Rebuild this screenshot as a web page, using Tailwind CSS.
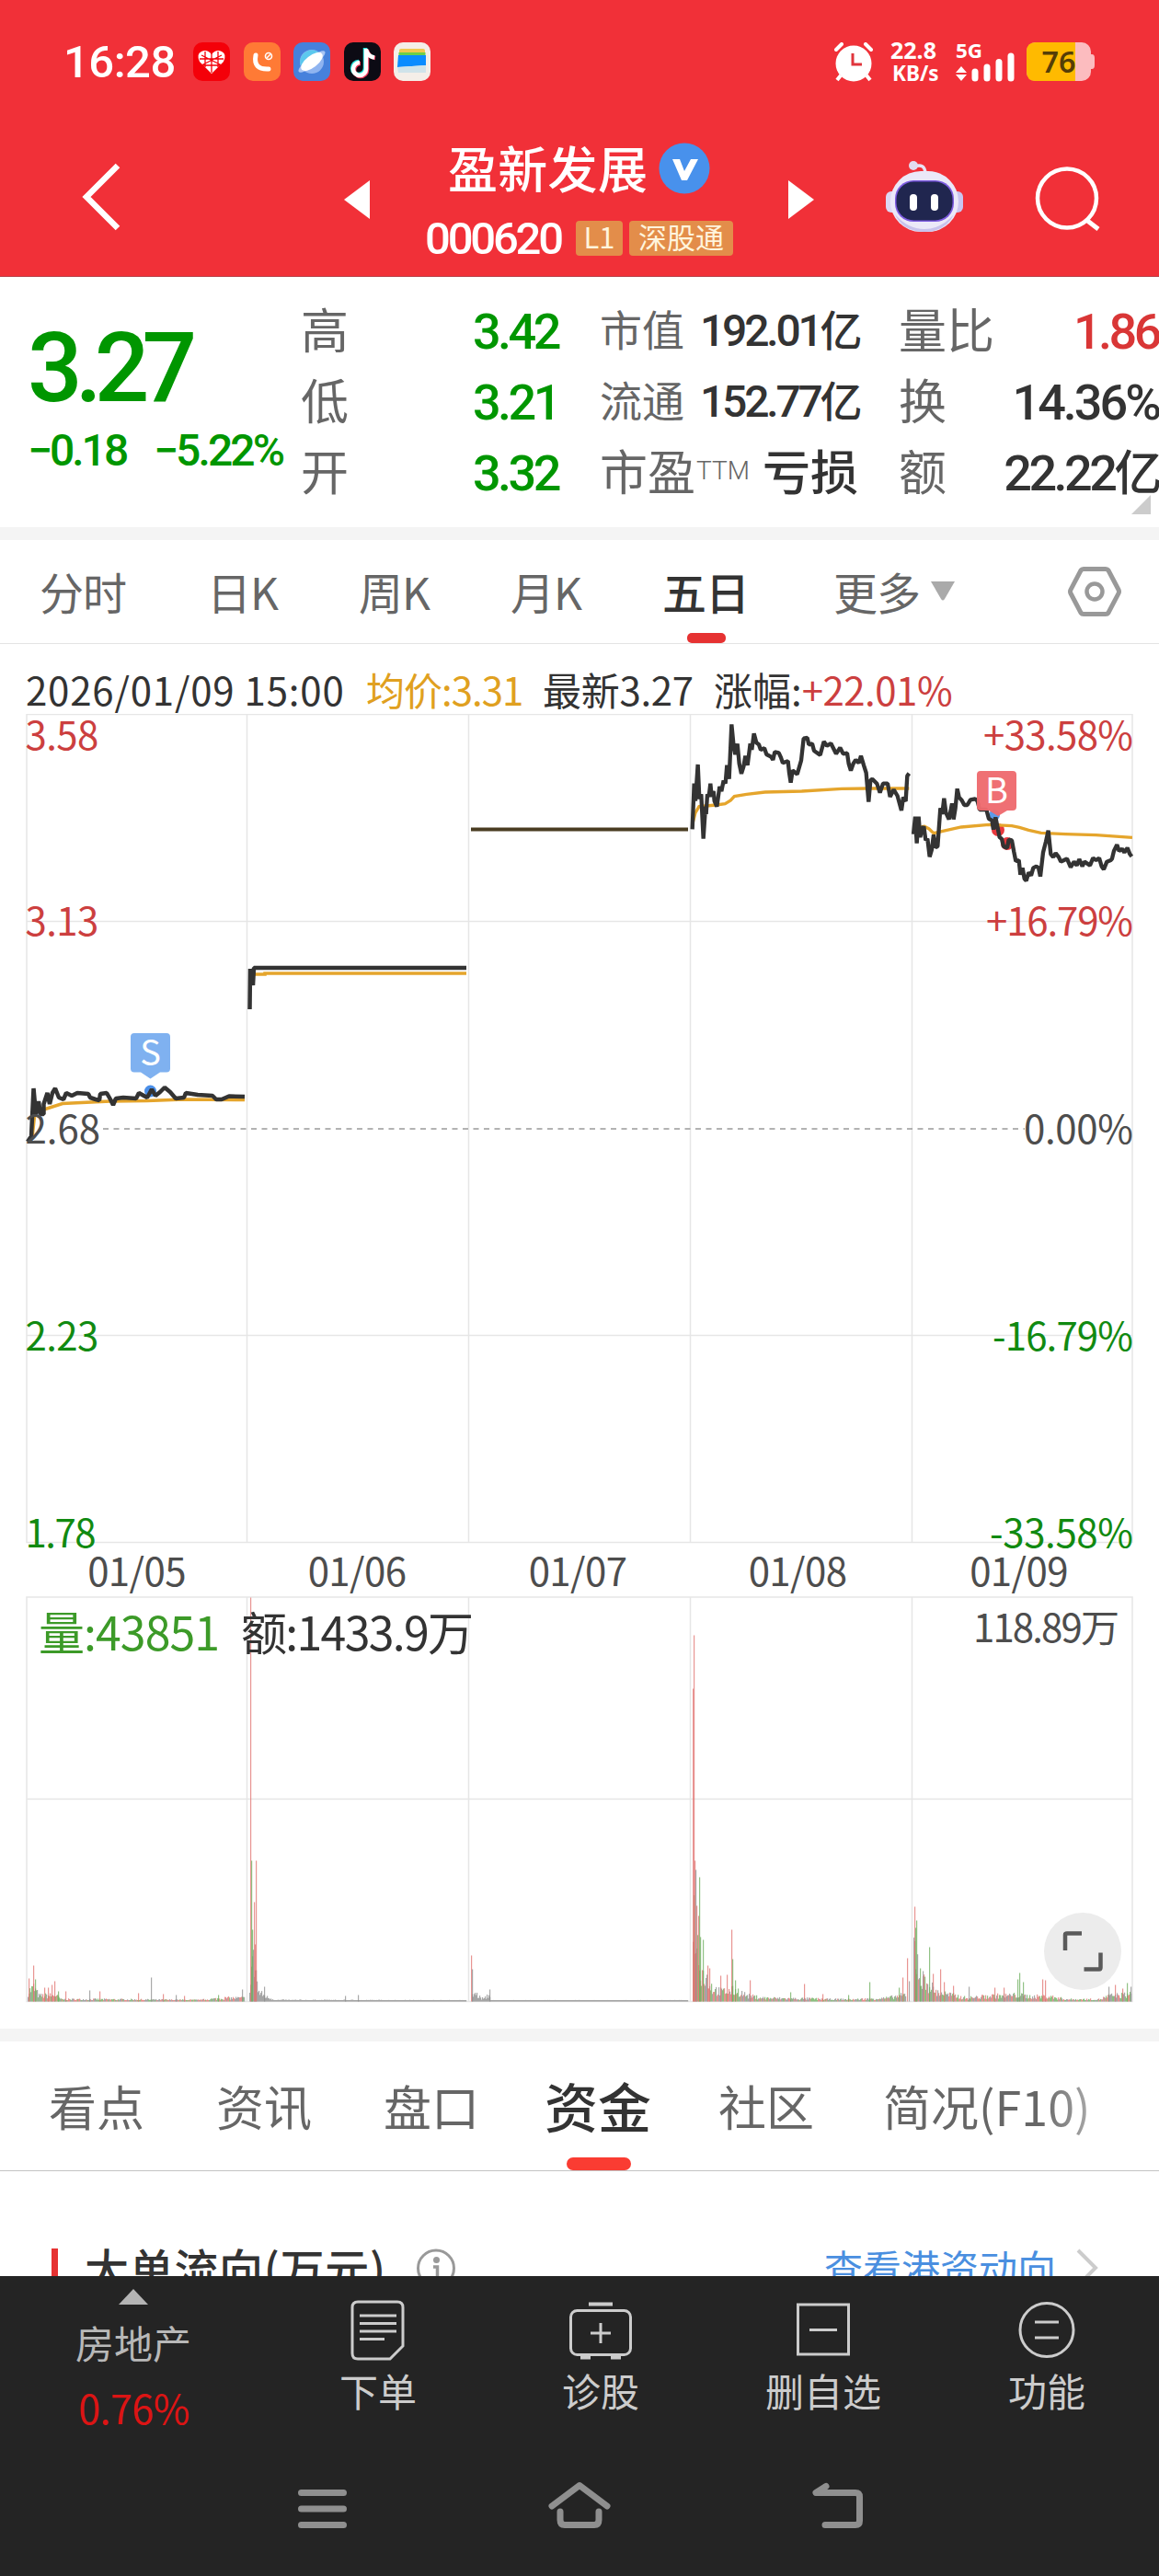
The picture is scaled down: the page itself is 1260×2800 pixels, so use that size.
<!DOCTYPE html>
<html lang="zh-CN">
<head>
  <meta charset="UTF-8">
  <meta name="viewport" content="width=device-width, initial-scale=1">
  <title>盈新发展 000620</title>
  <script src="https://cdn.jsdelivr.net/npm/@tailwindcss/browser@4"></script>
</head>

<body class="w-[1260px] h-[2800px] overflow-hidden bg-white text-[#333] font-['Noto_Sans_CJK_SC',sans-serif] leading-none whitespace-nowrap flex flex-col">

<!-- Header -->
<header class="h-[301px] shrink-0 bg-[#f13038] text-white border-b border-[#b84048]">
  <!-- Status bar -->
  <div class="flex items-center h-[134px] pl-[69px]">
    <div class="w-[141px] font-[Roboto] font-medium text-[49px] tracking-[-0.5px]">16:28</div>
    <div class="flex gap-[14.5px] w-[696px]">
      <svg class="w-10 h-[42px]" viewBox="0 0 40 42">
        <rect width="40" height="42" rx="10" fill="#f40009"/>
        <path d="M20 34L7 21Q3 13 9 10Q15 7 20 13Q25 7 31 10Q37 13 33 21Z" fill="#fff"/>
        <path d="M9 14L31 25M31 14L9 25M20 12V33M13 10V27M27 10V27M7 18H33M11 25H29" stroke="#f40009" stroke-width="1.3"/>
      </svg>
      <svg class="w-10 h-[42px]" viewBox="0 0 40 42">
        <rect width="40" height="42" rx="10" fill="#ff7a35"/>
        <path d="M13 14Q10 30 27 29" fill="none" stroke="#fff" stroke-width="5" stroke-linecap="round"/>
        <circle cx="27" cy="15" r="3.5" fill="none" stroke="#fff" stroke-width="1.6"/>
        <path d="M25 17L29 13" stroke="#fff" stroke-width="1.4"/>
      </svg>
      <svg class="w-10 h-[42px]" viewBox="0 0 40 42">
        <rect width="40" height="42" rx="10" fill="#4681dc"/>
        <circle cx="20" cy="21" r="13" fill="#8fb4f0"/>
        <path d="M8 26A13 13 0 0 1 28 11Z" fill="#5cc8ee"/>
        <ellipse cx="20" cy="21" rx="18" ry="5" transform="rotate(-38 20 21)" fill="#a9c5f3"/>
        <ellipse cx="20" cy="21" rx="14" ry="6.5" transform="rotate(-38 20 21)" fill="#fff"/>
      </svg>
      <svg class="w-10 h-[42px]" viewBox="0 0 40 42">
        <rect width="40" height="42" rx="10" fill="#0c0b14"/>
        <g fill="none" stroke-width="4.5">
          <path d="M23 6V28A7 7 0 1 1 16 21M23 8Q25 15 32 16" stroke="#25e4dc"/>
          <path d="M25 8V30A7 7 0 1 1 18 23M25 9Q27 16 34 17" stroke="#f33a5c"/>
          <path d="M24 7V29A7 7 0 1 1 17 22M24 8Q26 15.500 33 16.500" stroke="#fff"/>
        </g>
      </svg>
      <svg class="w-10 h-[42px]" viewBox="0 0 40 42">
        <rect width="40" height="42" rx="10" fill="#f4eee8"/>
        <rect x="6" y="7" width="28" height="8" rx="2" fill="#f0c850"/>
        <rect x="5.500" y="11" width="29" height="6" fill="#6cd048"/>
        <path d="M5 14H35V25L4 27Z" fill="#0a8cff"/>
        <path d="M4 27L35 25V33H5Z" fill="#cfe3ea"/>
      </svg>
    </div>
    <!-- Alarm -->
    <svg class="w-[44px] h-[43px] mr-[18px]" viewBox="0 0 44 43">
      <path d="M3 8L9 2M41 8L35 2" stroke="#fff" stroke-width="4" stroke-linecap="round"/>
      <path d="M8 36L4 41M36 36L40 41" stroke="#fff" stroke-width="4"/>
      <circle cx="22" cy="23" r="19.500" fill="#fff"/>
      <path d="M21 12V24H31" fill="none" stroke="#e0353c" stroke-width="3"/>
    </svg>
    <div class="w-[71px] font-['Noto_Sans'] font-bold text-[25px] leading-[25px]">
      <div>22.8</div>
      <div class="text-[22.5px] pl-0.5">KB/s</div>
    </div>
    <svg class="w-[66px] h-[44px] mr-[11px]" viewBox="0 0 66 44">
      <text x="0" y="18" fill="#fff" font-family="Noto Sans" font-weight="700" font-size="21" textLength="29" lengthAdjust="spacingAndGlyphs">5G</text>
      <path d="M0 34L6 27L12 34ZM0 36L6 43L12 36Z" fill="#fff"/>
      <path d="M21 34V41M34 29V41M47 23.500V41M60 17V41" stroke="#fff" stroke-width="7" stroke-linecap="round" transform="translate(0 -1)"/>
    </svg>
    <svg class="w-[74px] h-[42px]" viewBox="0 0 74 42">
      <path d="M69 13H71Q74 13 74 17V25Q74 29 71 29H69Z" fill="#fcbcbf"/>
      <rect width="70" height="42" rx="10" fill="#fcbcbf"/>
      <path d="M10 0H53V42H10Q0 42 0 32V10Q0 0 10 0Z" fill="#ffba00"/>
      <text x="35" y="33" text-anchor="middle" fill="#553e07" font-family="Noto Sans" font-weight="600" font-size="33" textLength="37" lengthAdjust="spacingAndGlyphs">76</text>
    </svg>
  </div>

  <!-- Title bar -->
  <div class="flex h-[166px]">
    <svg class="w-[50px] h-[84px] ml-[87px] mt-[38px]" viewBox="0 0 50 84"><path d="M41 8L7 42L41 76" fill="none" stroke="#fff" stroke-width="6.500"/></svg>
    <svg class="w-7 h-[42px] ml-[237px] mt-[62px]" viewBox="0 0 28 42"><path d="M0 21L28 0V42Z" fill="#fff"/></svg>
    <div class="w-[455px] pl-[58px]">
      <div class="flex pl-[27px] pt-[21px] h-[101px]">
        <h1 class="text-[54px] font-medium w-[229px] tracking-[0.300px]">盈新发展</h1>
        <svg class="w-14 h-14" viewBox="0 0 56 56"><circle cx="28" cy="28" r="27.500" fill="#4891ec"/><path d="M15 18H23L28 31L35 18H43L31 41H25Z" fill="#fff"/></svg>
      </div>
      <div class="flex items-center h-[50px] -mt-px">
        <div class="w-[166px] pl-0.5 font-[Roboto] font-medium text-[49px] tracking-[-3.200px]">000620</div>
        <div class="w-[51px] h-[38px] mr-[7px] bg-[#e38d4a] text-[#fff4dc] rounded-[4px] text-[31px] text-center leading-[34px]">L1</div>
        <div class="w-[113px] h-[38px] bg-[#e38d4a] text-[#fff4dc] rounded-[4px] text-[31px] text-center leading-[34px]">深股通</div>
      </div>
    </div>
    <svg class="w-7 h-[42px] mt-[62px]" viewBox="0 0 28 42"><path d="M28 21L0 0V42Z" fill="#fff"/></svg>
    <!-- Robot assistant -->
    <svg class="w-[86px] h-[80px] ml-[77px] mt-[39px]" viewBox="0 0 86 80">
      <path d="M32 8Q43 4 44 15" fill="none" stroke="#e9e2f4" stroke-width="3.500"/>
      <circle cx="31" cy="7" r="5" fill="#e2dcf0"/>
      <rect x="1" y="35" width="14" height="23" rx="6" fill="#dcd8f4"/>
      <rect x="71" y="35" width="14" height="23" rx="6" fill="#c9c5f0"/>
      <rect x="6" y="13" width="74" height="66" rx="33" fill="#ebe8f8"/>
      <path d="M11 60Q25 76 43 76T75 60Q66 79 43 79T11 60Z" fill="#c8c2ec"/>
      <rect x="11" y="23" width="64" height="45" rx="20" fill="#7d5be0"/>
      <rect x="12.500" y="24.500" width="61" height="42" rx="19" fill="#20264f"/>
      <rect x="27" y="38" width="8" height="18" rx="4" fill="#fff"/>
      <rect x="50" y="38" width="8" height="18" rx="4" fill="#fff"/>
    </svg>
    <svg class="w-[76px] h-[76px] ml-[76px] mt-[44px]" viewBox="0 0 76 76"><circle cx="36" cy="37.500" r="32" fill="none" stroke="#fff" stroke-width="4.500"/><path d="M57 61L70 71" stroke="#fff" stroke-width="5"/></svg>
  </div>
</header>

<!-- Quote summary -->
<section class="h-[272px] shrink-0 flex font-[Roboto,'Noto_Sans_CJK_SC',sans-serif]">
  <div class="w-[327px] pl-[30px] pt-[47px] text-[#009600] font-medium">
    <div class="text-[105px] tracking-[-8px]">3.27</div>
    <div class="flex mt-[13px] text-[48px] tracking-[-3px]">
      <span class="w-[137px]">−0.18</span>
      <span class="tracking-[-2.900px]">−5.22%</span>
    </div>
  </div>
  <div class="w-[280px] pt-[33px] text-[#666] text-[52px]">
    <div class="flex justify-between items-baseline h-[77px]"><span>高</span><b class="font-medium text-[#009600] text-[54px] tracking-[-3.500px]">3.42</b></div>
    <div class="flex justify-between items-baseline h-[77px]"><span>低</span><b class="font-medium text-[#009600] text-[54px] tracking-[-3.500px]">3.21</b></div>
    <div class="flex justify-between items-baseline h-[77px]"><span>开</span><b class="font-medium text-[#009600] text-[54px] tracking-[-3.500px]">3.32</b></div>
  </div>
  <div class="w-[285px] ml-[45px] pt-[35px] text-[#666] text-[46px]">
    <div class="flex items-baseline h-[77px]"><span class="w-[109px]">市值</span><b class="font-medium text-[#333] text-[48px] tracking-[-3.200px]">192.01<span class="text-[46px]">亿</span></b></div>
    <div class="flex items-baseline h-[77px]"><span class="w-[109px]">流通</span><b class="font-medium text-[#333] text-[48px] tracking-[-3.200px]">152.77<span class="text-[46px]">亿</span></b></div>
    <div class="flex items-start h-[77px] text-[52px]"><span class="w-[105px]">市盈</span><span class="w-[72px] text-[28px] font-light mt-2">TTM</span><b class="font-medium text-[#333]">亏损</b></div>
  </div>
  <div class="w-[283px] ml-[40px] pt-[33px] text-[#666] text-[52px]">
    <div class="flex justify-between items-baseline h-[77px]"><span>量比</span><b class="font-medium text-[#d93636] text-[54px] tracking-[-3.500px]">1.86</b></div>
    <div class="flex justify-between items-baseline h-[77px]"><span>换</span><b class="font-medium text-[#333] text-[54px] tracking-[-3px]">14.36%</b></div>
    <div class="flex justify-between items-baseline h-[50px]"><span>额</span><b class="font-medium text-[#333] text-[54px] tracking-[-3.500px]">22.22<span class="text-[52px]">亿</span></b></div>
    <svg class="w-[21px] h-[21px] ml-[253px]" viewBox="0 0 21 21"><path d="M21 0V21H0Z" fill="#ccc"/></svg>
  </div>
</section>

<div class="h-[14px] shrink-0 bg-[#f4f4f4]"></div>

<!-- Period tabs -->
<nav class="h-[113px] shrink-0 flex pt-[31px] pl-[43px] text-[48px] tracking-[-1px] text-[#666] border-b border-[#e4e4e4]">
  <div class="w-[182px]">分时</div>
  <div class="w-[165px]">日K</div>
  <div class="w-[165px]">周K</div>
  <div class="w-[165px]">月K</div>
  <div class="w-[186px] text-[#333] font-medium">
    五日
    <div class="w-[42px] h-[11px] ml-[27px] mt-[22px] rounded-[5px] bg-[#e63232]"></div>
  </div>
  <div class="w-[106px]">更多</div>
  <svg class="w-[26px] h-[21px] mt-[14px]" viewBox="0 0 26 21"><path d="M0 0H26L15 19Q13 22 11 19Z" fill="#aaa"/></svg>
  <svg class="w-[58px] h-[56px] ml-[123px] -mt-[3px]" viewBox="0 0 58 56"><path d="M17 3.500H41Q43 3.500 44 5L55 26Q56 28 55 30L44 51Q43 52.500 41 52.500H17Q15 52.500 14 51L3 30Q2 28 3 26L14 5Q15 3.500 17 3.500Z" fill="none" stroke="#999" stroke-width="5"/><circle cx="29" cy="28" r="8.500" fill="none" stroke="#999" stroke-width="4.500"/></svg>
</nav>

<!-- Legend -->
<div class="h-[76px] shrink-0 flex pt-[28px] pl-[28px] text-[42px]">
  <span class="w-[370px] tracking-[0.800px]">2026/01/09 15:00</span>
  <span class="w-[192px] text-[#e0a020] tracking-[-1px]">均价:3.31</span>
  <span class="w-[186px] tracking-[-0.300px]">最新3.27</span>
  <span>涨幅:<span class="text-[#cc3f3f] tracking-[-0.500px]">+22.01%</span></span>
</div>

<!-- Price and volume chart -->
<svg class="w-[1260px] h-[1429px] shrink-0" viewBox="0 776 1260 1429" font-size="42">
  <g fill="none" stroke="#e6e6e6" stroke-width="1.500">
    <rect x="29" y="776.500" width="1202" height="900"/>
    <rect x="29" y="1736" width="1202" height="439.500"/>
    <path d="M268.500 777V1676M509.500 777V1676M750.500 777V1676M991.500 777V1676M29 1001.500H1231M29 1451.500H1231"/>
    <path d="M268.500 1736V2175M509.500 1736V2175M750.500 1736V2175M991.500 1736V2175M29 1955.500H1231"/>
    <path d="M112 1227H1114" stroke="#999" stroke-dasharray="6 5.500"/>
  </g>
  <g id="volume"></g>

  <!-- Trade points -->
  <circle cx="163.500" cy="1186" r="6.500" fill="#4a8ee8"/>
  <circle cx="1081" cy="886" r="6" fill="#5b9be8"/>
  <circle cx="1085" cy="902" r="7" fill="#e8383d"/>
  <circle cx="1095" cy="917" r="7" fill="#e8383d"/>

  <!-- Average price -->
  <g fill="none" stroke="#e5a52c" stroke-width="3.500">
    <path d="M35 1236L38 1209L54 1204L68 1199.500L120 1197L160 1196.500L200 1195L266 1195.500"/>
    <path d="M276 1059H288V1058H507"/>
    <polyline transform="translate(745 780) scale(.3333)" stroke-width="10" points="24,345 33,310 45,290 100,285 130,281 148,270 160,257 200,250 260,243 380,240 510,232 600,231 730,231"/>
    <polyline transform="translate(985 820) scale(.3333)" stroke-width="10" points="24,240 60,235 75,243 90,257 120,250 180,237 270,229 345,233 370,238 400,247 440,256 520,260 620,263 738,271"/>
  </g>

  <!-- Price -->
  <g fill="none" stroke="#333" stroke-width="4.500" stroke-linejoin="bevel">
    <polyline points="30,1241 34,1235 36.500,1183 39,1211 42,1197 44,1211 47.500,1211 47.500,1200 51.500,1188 54,1200 57,1188 60,1183 64,1193 69,1195 72,1188 78,1191 84,1188 96,1189 98,1193 104,1195 108,1196 109,1189 116,1188 120,1195 123,1201 126,1194 134,1193 148,1194 151,1188 160,1193 165,1184 169,1191 174,1187 179,1182 185,1187 191,1194 200,1193 202,1188 215,1190 231,1191 235,1195 241,1195 249,1191.500 266,1192"/>
    <path d="M271.500 1097L272 1053L275 1071L276 1052L507 1052"/>
    <path d="M512 901.500H748" stroke="#4a3d22" stroke-width="4"/>
    <polyline transform="translate(745 780) scale(.3333)" stroke-width="13" points="23,364 29,215 33,272 41,153 46,265 52,250 59,395 66,290 68,315 72,250 77,258 82,215 86,258 92,240 95,272 103,290 112,225 118,240 125,205 131,215 136,155 143,200 151,22 158,95 163,120 170,85 176,150 183,183 190,160 196,125 203,155 212,85 217,105 224,52 232,82 240,88 246,105 258,100 265,120 280,128 286,138 292,112 305,115 312,130 318,148 335,142 339,180 344,212 350,172 365,185 378,140 386,68 398,66 403,88 414,85 420,108 440,122 452,78 462,92 475,84 492,118 505,98 515,118 528,116 533,150 540,173 548,150 556,138 566,148 573,125 582,155 590,180 598,275 604,205 610,200 625,215 635,245 645,215 660,215 668,258 680,235 692,255 705,303 711,260 719,273 724,190 730,182"/>
    <polyline transform="translate(985 820) scale(.3333)" stroke-width="13" points="24,260 30,203 35,290 41,203 46,270 52,245 58,235 64,280 70,275 77,334 84,310 90,262 96,303 103,300 112,175 118,195 124,143 130,190 140,212 150,160 155,212 161,175 167,112 173,140 182,150 190,165 200,165 210,148 225,145 233,152 240,180 262,180 270,210 280,215 285,245 292,205 298,235 305,270 312,275 318,300 330,305 335,278 345,280 352,318 358,348 368,345 373,392 380,370 386,405 392,412 400,385 408,395 415,370 425,365 432,370 438,398 447,320 456,285 464,248 472,325 480,335 488,322 498,335 505,350 515,345 525,340 537,368 548,350 557,362 565,342 575,365 582,350 600,362 610,338 620,345 630,338 638,365 645,375 655,350 668,345 672,340 678,315 688,295 695,315 705,308 712,320 722,305 730,325 736,333"/>
  </g>

  <!-- Buy / sell flags -->
  <g fill="#fff" text-anchor="middle" font-size="38">
    <path d="M146 1123H181Q185 1123 185 1127V1161.500Q185 1165.500 181 1165.500H174L163.500 1172.500L153 1165.500H146Q142 1165.500 142 1161.500V1127Q142 1123 146 1123Z" fill="#7fb1f0"/>
    <text x="163.500" y="1158">S</text>
    <path d="M1067 838H1101Q1105 838 1105 842V877Q1105 881 1101 881H1095L1085 887L1075 881H1066Q1062 881 1062 877V842Q1062 838 1066 838Z" fill="#ee6a6e" fill-opacity=".96"/>
    <text x="1083.500" y="873">B</text>
  </g>

  <!-- Axis labels -->
  <g fill="#cc3f3f">
    <text x="27.500" y="814.500" letter-spacing="-.6">3.58</text>
    <text x="27.500" y="1016.500" letter-spacing="-.6">3.13</text>
    <text x="1232" y="814.500" text-anchor="end" textLength="163">+33.58%</text>
    <text x="1232" y="1016.500" text-anchor="end" textLength="160">+16.79%</text>
  </g>
  <g fill="#4d4d4d">
    <text x="27.500" y="1243">2.68</text>
    <text x="1232" y="1243" text-anchor="end" textLength="119">0.00%</text>
  </g>
  <g fill="#118a11">
    <text x="27.500" y="1467.500" letter-spacing="-.6">2.23</text>
    <text x="27.500" y="1682" letter-spacing="-1.500">1.78</text>
    <text x="1232" y="1467.500" text-anchor="end" textLength="153">-16.79%</text>
    <text x="1232" y="1682" text-anchor="end" textLength="156">-33.58%</text>
  </g>
  <g fill="#4d4d4d" text-anchor="middle" letter-spacing="-.6">
    <text x="148.500" y="1724">01/05</text>
    <text x="388" y="1724">01/06</text>
    <text x="628" y="1724">01/07</text>
    <text x="867" y="1724">01/08</text>
    <text x="1107.500" y="1724">01/09</text>
  </g>
  <text x="42" y="1793.500" fill="#3c9a28" font-size="50" textLength="197">量:43851</text>
  <text x="262" y="1793.500" fill="#333" font-size="50" textLength="253">额:1433.9万</text>
  <text x="1217" y="1785" fill="#4d4d4d" text-anchor="end" textLength="159">118.89万</text>

  <!-- Fullscreen button -->
  <circle cx="1177" cy="2121" r="42" fill="#ececec"/>
  <path d="M1158 2120V2103Q1158 2101.500 1160 2101.500H1176M1196.500 2122.500V2138.500Q1196.500 2140.500 1195 2140.500H1178.500" fill="none" stroke="#5a5a5a" stroke-width="4.500"/>
</svg>

<div class="h-[14px] shrink-0 bg-[#f4f4f4]"></div>

<!-- Content tabs -->
<nav class="h-[141px] shrink-0 flex pt-[44px] pl-[53px] text-[52px] text-[#666] border-b border-[#c4c4c4]">
  <div class="w-[182px]">看点</div>
  <div class="w-[182px]">资讯</div>
  <div class="w-[175px]">盘口</div>
  <div class="w-[189px] -mt-1 text-[58px] font-medium text-[#333]">
    资金
    <div class="w-[70px] h-[14px] ml-[24px] mt-[28px] rounded-full bg-[#fa3c32]"></div>
  </div>
  <div class="w-[179px]">社区</div>
  <div class="h-[80px] text-transparent bg-clip-text bg-linear-to-r from-[#666] from-75% to-[#aaa]">简况(F10)</div>
</nav>

<!-- Capital flow heading, cut off by the toolbar -->
<section class="h-[114px] shrink-0 overflow-hidden flex pl-14 pt-[80px]">
  <div class="w-[7px] h-12 mt-1 mr-[29px] bg-[#e63232]"></div>
  <h2 class="w-[360px] text-[48px] font-medium tracking-[0.700px]">大单流向(万元)</h2>
  <svg class="w-[44px] h-[44px] mt-[4px] ml-px" viewBox="0 0 44 44"><circle cx="21" cy="21.500" r="19.500" fill="none" stroke="#999" stroke-width="3"/><circle cx="21.500" cy="12.500" r="3.500" fill="#999"/><path d="M18 20H22.500V34" fill="none" stroke="#999" stroke-width="3.500"/></svg>
  <a class="w-[274px] ml-[399px] mt-[3px] text-[42px] text-[#4a8fe0]">查看港资动向</a>
  <svg class="w-[26px] h-[44px] mt-[3px]" viewBox="0 0 26 44"><path d="M2 3L21 22L2 41" fill="none" stroke="#ccc" stroke-width="4"/></svg>
</section>

<!-- Toolbar -->
<footer class="h-[326px] shrink-0 bg-[#242424] text-[#ccc]">
  <div class="flex h-[205px] text-[42px]">
    <div class="w-[290px] flex flex-col items-center pt-[14px] text-[#b8b8b8]">
      <svg class="w-8 h-[17px] mr-px" viewBox="0 0 32 17"><path d="M16 0L32 17H0Z" fill="#b4b4b4"/></svg>
      <div class="mt-[20px]">房地产</div>
      <div class="mt-[28px] pl-px text-[43px] tracking-[-0.5px] text-[#dc1414]">0.76%</div>
    </div>
    <div class="w-[242px] flex flex-col items-center pt-[25px]">
      <svg class="w-[60px] h-[68px]" viewBox="0 0 60 68" fill="none" stroke="#ccc" stroke-width="3">
        <path d="M8 3H51Q57 3 57 9V51L43 65H8Q2 65 2 59V9Q2 3 8 3Z"/>
        <path d="M10 18H50M10 26.500H50M10 35H50M10 43.500H37"/>
      </svg>
      <div class="mt-[10px]">下单</div>
    </div>
    <div class="w-[242px] flex flex-col items-center pt-[25px]">
      <svg class="w-[68px] h-[68px]" viewBox="0 0 68 68" fill="none" stroke="#ccc" stroke-width="3">
        <path d="M21 5.500H47" stroke-width="4"/>
        <rect x="1.500" y="12.500" width="65" height="48" rx="7"/>
        <path d="M23 37H45M34 26V48"/>
        <path d="M12 63.500H23M45 63.500H56" stroke-width="4"/>
      </svg>
      <div class="mt-[10px]">诊股</div>
    </div>
    <div class="w-[242px] flex flex-col items-center pt-[25px]">
      <svg class="w-[60px] h-[68px]" viewBox="0 0 60 68" fill="none" stroke="#ccc" stroke-width="3">
        <rect x="2.500" y="6" width="55" height="54"/>
        <path d="M15 33.500H45"/>
      </svg>
      <div class="mt-[10px]">删自选</div>
    </div>
    <div class="w-[244px] flex flex-col items-center pt-[25px]">
      <svg class="w-[62px] h-[68px]" viewBox="0 0 62 68" fill="none" stroke="#ccc" stroke-width="3">
        <circle cx="31" cy="33.500" r="29"/>
        <path d="M18 25H44M18 42H44"/>
      </svg>
      <div class="mt-[10px]">功能</div>
    </div>
  </div>
  <!-- System navigation -->
  <div class="flex pl-[324px] pt-[15px]">
    <svg class="w-[53px] h-[60px] mr-[217px]" viewBox="0 0 53 60"><path d="M3.500 15.500H49.500M3.500 33H49.500M3.500 50.500H49.500" stroke="#8f8f8f" stroke-width="7" stroke-linecap="round"/></svg>
    <svg class="w-[72px] h-[60px] mr-[216px]" viewBox="0 0 72 60"><path d="M6 30L36 7.500L66 30M15 36V45Q15 50.500 20 50.500H52Q57 50.500 57 45V36" fill="none" stroke="#8f8f8f" stroke-width="7" stroke-linecap="round" stroke-linejoin="round"/></svg>
    <svg class="w-[60px] h-[60px]" viewBox="0 0 60 60"><path d="M16 8.500L5 15.500H48Q52.500 15.500 52.500 20V46Q52.500 50.500 48 50.500H15" fill="none" stroke="#8f8f8f" stroke-width="7" stroke-linecap="round" stroke-linejoin="round"/></svg>
  </div>
</footer>

<script>
  const RED = '#e0726f', GREEN = '#6cae5c', GREY = '#8c8c8c';
  // envelope: [x, height] points of typical volume, spikes: [x, height, color]
  const days = [
    { env: [[30, 14], [36, 20], [42, 8], [60, 9], [66, 3], [110, 3], [215, 2], [245, 5], [266, 5]],
      colors: [RED, GREEN, GREY],
      spikes: [[31, 25, RED], [36, 39, RED], [38, 24, GREEN], [48, 15, RED], [52, 15, RED], [56, 18, RED], [59, 22, RED], [63, 11, GREEN], [71, 11, RED], [97, 12, GREY], [108, 11, RED], [150, 9, RED], [164, 26, GREY], [177, 8, RED], [191, 7, GREY], [200, 6, RED], [237, 7, GREEN], [263, 13, GREY]] },
    { env: [[271, 25], [274, 60], [278, 45], [280, 14], [290, 6], [300, 2], [507, 1.5]],
      colors: [GREY],
      spikes: [[272, 439, RED], [273, 153, GREEN], [274, 78, GREEN], [276, 108, RED], [277, 62, RED], [278, 153, RED], [287, 16, GREY], [375, 6, GREY], [389, 7, GREY]] },
    { env: [[513, 8], [516, 12], [522, 5], [526, 4], [531, 10], [533, 1.5], [748, 1.5]],
      colors: [GREY],
      spikes: [[512, 50, RED], [513, 35, GREY], [532, 13, GREY]] },
    { env: [[753, 130], [757, 90], [762, 45], [768, 32], [775, 18], [783, 14], [800, 16], [812, 8], [830, 5], [860, 4], [880, 4], [900, 3], [930, 3], [965, 5], [985, 10]],
      colors: [RED, GREEN, GREY],
      spikes: [[753, 340, RED], [754, 398, RED], [755, 153, RED], [756, 143, GREY], [757, 104, RED], [759, 93, RED], [760, 135, GREEN], [761, 70, GREEN], [764, 67, GREEN], [769, 39, RED], [771, 36, RED], [783, 28, RED], [790, 29, RED], [795, 78, RED], [796, 46, GREEN], [799, 23, GREEN], [815, 23, RED], [859, 10, GREEN], [874, 19, RED], [894, 8, RED], [922, 7, GREEN], [945, 21, GREEN], [977, 15, GREEN], [981, 26, RED], [986, 47, RED], [988, 22, GREY]] },
    { env: [[993, 78], [997, 60], [1000, 30], [1010, 25], [1016, 14], [1030, 10], [1050, 5], [1080, 8], [1105, 9], [1120, 7], [1140, 7], [1160, 3], [1195, 3], [1205, 8], [1230, 10]],
      colors: [RED, GREEN, GREY],
      spikes: [[994, 103, RED], [995, 80, GREEN], [996, 88, GREEN], [1000, 36, GREEN], [1003, 33, GREY], [1010, 59, GREEN], [1014, 30, RED], [1022, 35, RED], [1026, 21, RED], [1036, 17, RED], [1053, 16, GREY], [1081, 15, RED], [1091, 15, RED], [1106, 24, GREEN], [1108, 31, GREEN], [1112, 21, GREEN], [1133, 24, RED], [1136, 23, RED], [1205, 16, GREY], [1212, 18, RED], [1220, 14, RED], [1225, 20, GREEN], [1229, 16, GREY]] },
  ];

  let seed = 7;
  function rand() {
    seed = (seed * 16807) % 2147483647;
    return seed / 2147483647;
  }

  function bar(x, h, color) {
    return `<rect x="${x}" y="${2175.5 - h}" width="1.2" height="${h}" fill="${color}" fill-opacity=".75"/>`;
  }

  let out = '';
  days.forEach(({ env, colors, spikes }) => {
    for (let i = 0; i < env.length - 1; i++) {
      const [x0, h0] = env[i], [x1, h1] = env[i + 1];
      for (let x = x0; x < x1; x++) {
        const h = h0 + (h1 - h0) * (x - x0) / (x1 - x0);
        out += bar(x, Math.max(1.5, h * (0.35 + rand() * 0.75)), colors[Math.floor(rand() * colors.length)]);
      }
    }
    spikes.forEach(([x, h, c]) => { out += bar(x, h, c); });
  });
  document.getElementById('volume').innerHTML = out;
</script>

</body>
</html>
